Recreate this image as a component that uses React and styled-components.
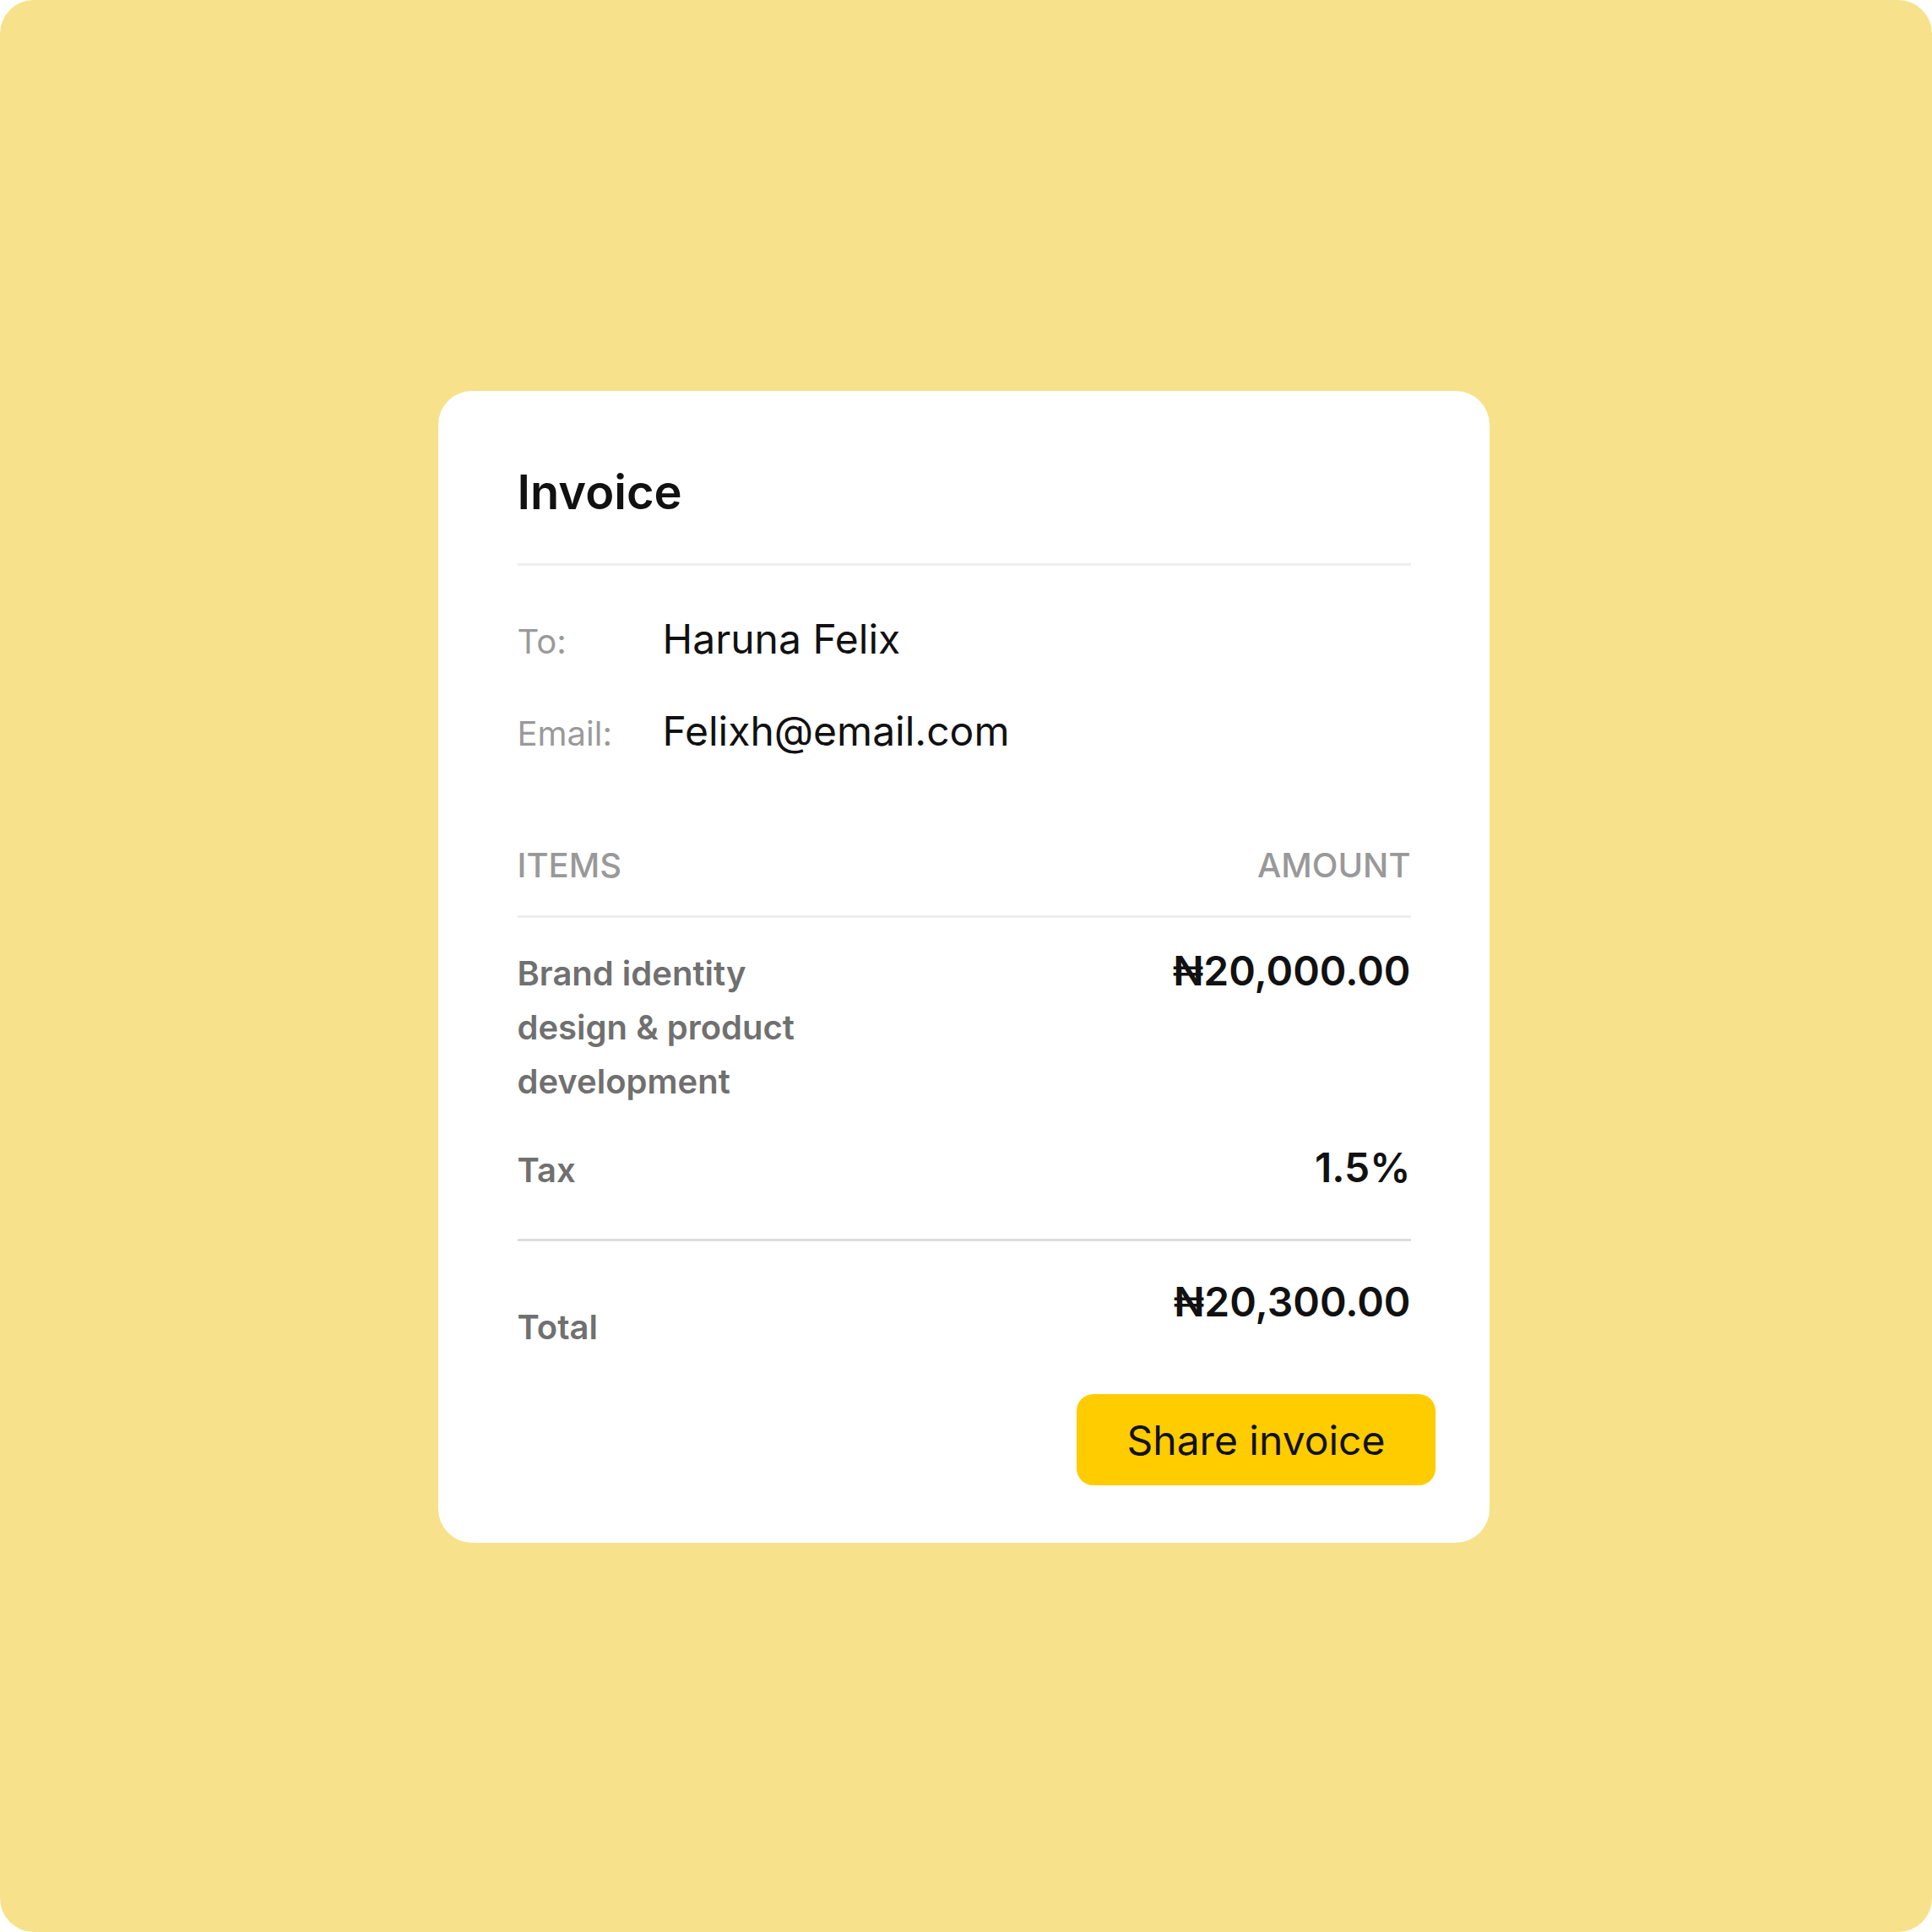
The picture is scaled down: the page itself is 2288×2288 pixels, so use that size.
import { createGlobalStyle, styled } from "styled-components";

const GlobalStyle = createGlobalStyle`
  html, body {
    margin: 0;
    padding: 0;
    background: #ffffff;
  }
  body {
    font-family: Inter, "Noto Sans", "Liberation Sans", sans-serif;
  }
`;

const Page = styled.div`
  width: 2288px;
  height: 2288px;
  box-sizing: border-box;
  padding: 2px 6px 0 0;
  background-color: #f7e28b;
  border-radius: 40px;
  display: flex;
  align-items: center;
  justify-content: center;
`;

const Card = styled.div`
  width: 1245px;
  box-sizing: border-box;
  background: #ffffff;
  border-radius: 40px;
  padding: 86px 93px 68px 94px;
  display: flex;
  flex-direction: column;
`;

const Title = styled.h1`
  margin: 0;
  font-size: 56px;
  line-height: 68px;
  font-weight: 600;
  color: #111111;
`;

const Divider = styled.hr`
  margin: ${(p) => p.$top}px 0 0;
  border: none;
  height: 3px;
  background: ${(p) => p.$color || "#eeeeee"};
`;

const Details = styled.div`
  margin-top: 58px;
  display: grid;
  grid-template-columns: 172px 1fr;
  row-gap: 48px;
  align-items: baseline;
`;

const Label = styled.span`
  font-size: 40px;
  line-height: 58px;
  color: #9a9a9a;
`;

const Value = styled.span`
  font-size: 48px;
  line-height: 58px;
  color: #111111;
`;

const TableHead = styled.div`
  margin-top: 103px;
  display: flex;
  justify-content: space-between;
  font-size: 40px;
  line-height: 48px;
  font-weight: 500;
  color: #999999;
`;

const Row = styled.div`
  margin-top: ${(p) => p.$top}px;
  display: flex;
  justify-content: space-between;
  align-items: ${(p) => p.$align || "baseline"};
`;

const ItemName = styled.span`
  max-width: 380px;
  margin-top: ${(p) => p.$offset || 0}px;
  font-size: 40px;
  line-height: 64px;
  font-weight: 600;
  color: #707070;
`;

const Amount = styled.span`
  font-size: 48px;
  line-height: 64px;
  font-weight: 600;
  color: #111111;
  white-space: nowrap;
`;

const ShareButton = styled.button`
  align-self: flex-end;
  margin: 47px -29px 0 0;
  height: 108px;
  padding: 0 59px;
  border: none;
  border-radius: 20px;
  background: #ffcc00;
  font-family: inherit;
  font-size: 48px;
  font-weight: 400;
  color: #111111;
  cursor: pointer;
`;

export default function App() {
  return (
    <>
      <GlobalStyle />
      <Page>
        <Card>
          <Title>Invoice</Title>
          <Divider $top={50} />

          <Details>
            <Label>To:</Label>
            <Value>Haruna Felix</Value>
            <Label>Email:</Label>
            <Value>Felixh@email.com</Value>
          </Details>

          <TableHead>
            <span>ITEMS</span>
            <span>AMOUNT</span>
          </TableHead>
          <Divider $top={35} />

          <Row $top={31}>
            <ItemName>Brand identity design &amp; product development</ItemName>
            <Amount>₦20,000.00</Amount>
          </Row>
          <Row $top={38}>
            <ItemName>Tax</ItemName>
            <Amount>1.5%</Amount>
          </Row>
          <Divider $top={49} $color="#dddddd" />

          <Row $top={40} $align="flex-start">
            <ItemName $offset={30}>Total</ItemName>
            <Amount>₦20,300.00</Amount>
          </Row>

          <ShareButton>Share invoice</ShareButton>
        </Card>
      </Page>
    </>
  );
}
